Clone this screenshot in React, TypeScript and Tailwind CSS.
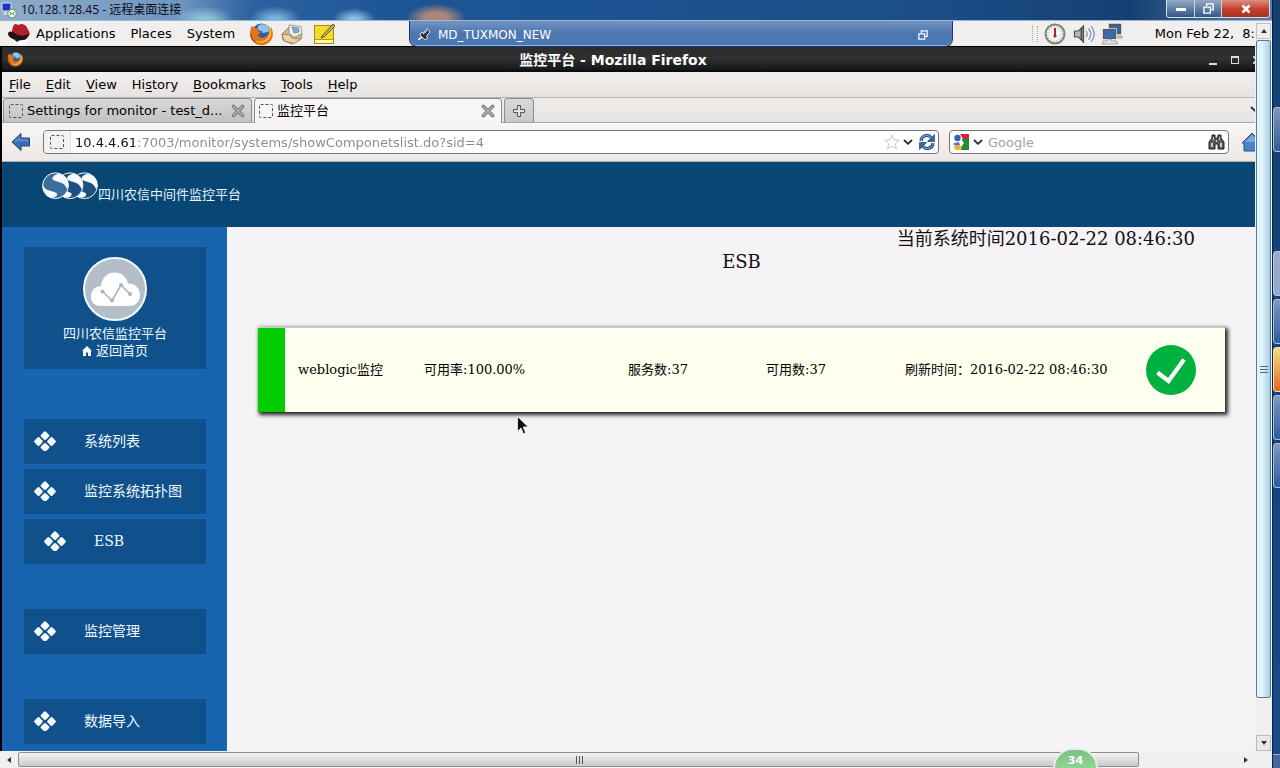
import React from "react";

const uiFont = "font-['DejaVu_Sans','Noto_Sans_CJK_SC',sans-serif]";
const pageFont = "font-['DejaVu_Serif','Noto_Sans_CJK_SC',serif]";

function FirefoxIcon({ className }: { className: string }) {
  return (
    <svg viewBox="0 0 24 24" className={className} aria-hidden="true">
      <circle cx="12.5" cy="11" r="9.5" fill="#2a5fa8" />
      <path d="M9 4c3-3 9-2 11 2 1 3-1 5-3 4-2 2-4 1-4-1-3 0-5-2-4-5z" fill="#8cc4ea" />
      <path d="M3 3.500c.5 1.500 1.500 2 3 2.200C8 5.500 9.500 7 9 9c1 .5 2.500.5 3 1-.5 1.500-2.500 1.500-3 3 1 3 5 3.500 8 1.500 2-1.500 3.500-4 3-7.500 1.500 1 2 1.500 2 1l-.5-4C24.500 9 25 15 21 19.500 17 24 9 24.500 4.500 20 .5 16 0 9 3 3.500z" fill="#e4731b" />
      <path d="M20.500 4c3 5 2 11-1.500 14-3.500 3.500-10 3.500-13 .5 5 2 10 1 12.500-2.500 2.500-3.500 3-7 2-12z" fill="#f8c63c" />
      <path d="M2 10c0 4 2 8.500 6 10.500-5-1-8-6-6-10.500z" fill="#b23a12" />
    </svg>
  );
}

function RedHatIcon() {
  return (
    <svg viewBox="0 0 24 24" className="size-6" aria-hidden="true">
      <path d="M3 13c1 6 6 10 12 10 4 0 6-3 6-7l-8-2z" fill="#fff" />
      <path d="M1 12c0-2 2-3 4-2 4 4 10 6 17 2-1 4-3 6-6 6-6 1-14-1-15-6z" fill="#181414" />
      <path d="M5 10c0-3 1-7 3-8 2 0 3 1 4 1 2-2 5-1 7 1 2 3 3 5 4 8-5 4-14 2-18-2z" fill="#b32027" />
      <path d="M5 9c4 4 10 6 17 3v2C15 16 8 14 5 11z" fill="#3a0c0e" />
      <path d="M4 15c3 2 6 3 9 3l-3 2z" fill="#2b2220" />
    </svg>
  );
}

function MailIcon() {
  return (
    <svg viewBox="0 0 22 22" className="size-[22px]" aria-hidden="true">
      <path d="M1 11 8 4l13 7-1 5-9 5-9-4z" fill="#d9b98a" stroke="#94724a" strokeWidth=".8" />
      <path d="m8 2 12 1.500 1 7-8 4-5-5z" fill="#eef2ee" stroke="#7f8a86" strokeWidth=".8" />
      <path d="m11 4 6.500 1 .5 4-5 1z" fill="#83aac3" stroke="#496d83" strokeWidth=".6" />
      <path d="m1 11 8 1 2 3 9 1-7 4.500L3 18z" fill="#ead2aa" stroke="#94724a" strokeWidth=".8" />
    </svg>
  );
}

function NoteIcon() {
  return (
    <svg viewBox="0 0 22 22" className="size-[22px]" aria-hidden="true">
      <rect x="1.500" y="2.500" width="19" height="18" fill="#f5dc28" stroke="#a58b12" />
      <path d="M2 17h18v3H2z" fill="#fff6a8" />
      <path d="M2 16.500h18" stroke="#b89c18" />
      <path d="M9 13 20 1l2 2L11 14l-3 1z" fill="#d4a95b" stroke="#4a3b1c" strokeWidth=".8" />
    </svg>
  );
}

function PinIcon() {
  return (
    <svg viewBox="0 0 12 12" className="size-3" aria-hidden="true">
      <path d="m0 11 4-3" stroke="#fff" strokeWidth="1.500" />
      <path d="m3 4 3-1 3-3 3 3-3 3 0 4-2 1-5-5z" fill="#2c3137" stroke="#e8f0f8" strokeWidth=".9" />
      <path d="m5 5 4-3" stroke="#fff" />
    </svg>
  );
}

function RestoreIcon({ className }: { className: string }) {
  return (
    <svg viewBox="0 0 12 12" className={className} fill="none" stroke="currentColor" strokeWidth="1.500" aria-hidden="true">
      <path d="M4 3.500V1h7v6.500H8.500" />
      <path d="M1 4.500h7V11H1z" />
    </svg>
  );
}

function GaugeIcon() {
  return (
    <svg viewBox="0 0 22 22" className="size-[22px]" aria-hidden="true">
      <circle cx="11" cy="11" r="9.500" fill="#f4f4f1" stroke="#7c807e" strokeWidth="2" />
      <circle cx="11" cy="11" r="7.300" fill="none" stroke="#a4a7a4" strokeDasharray="1 2" strokeWidth="1.300" />
      <path d="M11 5v8" stroke="#c31e1e" strokeWidth="2" />
      <circle cx="11" cy="13" r="1.600" fill="#b02020" />
    </svg>
  );
}

function SpeakerIcon() {
  return (
    <svg viewBox="0 0 22 22" className="size-[22px]" fill="none" aria-hidden="true">
      <path d="M1.500 8v6h4l5 5V3l-5 5z" fill="#b4b8b4" stroke="#4c504e" strokeWidth="1.200" />
      <path d="M8.500 5v12" stroke="#4c504e" strokeWidth="2" />
      <path d="M13 8c1.500 2 1.500 4 0 6M15.500 5.500c3 3.500 3 7.500 0 11M18 3c4 5 4 11 0 16" stroke="#6d8fb8" strokeWidth="1.200" />
    </svg>
  );
}

function NetworkIcon() {
  return (
    <svg viewBox="0 0 22 22" className="size-[22px]" aria-hidden="true">
      <path d="M8.500 1.500h11v9h-11z" fill="#3465a4" stroke="#555753" strokeWidth="1.400" />
      <path d="M16 13h5v2h-4z" fill="#d3d7cf" stroke="#888a85" strokeWidth=".7" />
      <path d="M2.500 6.500h12v9h-12z" fill="#3465a4" stroke="#e8e8e4" strokeWidth="2.600" />
      <path d="M2.500 6.500h12v9h-12z" fill="#3a6cab" stroke="#555753" strokeWidth="1.200" />
      <path d="M6.500 16h4v2h5l1 3H1l1-3h4.500z" fill="#e3e5e0" stroke="#888a85" strokeWidth=".7" />
    </svg>
  );
}

function PagePlaceholder() {
  return (
    <svg viewBox="0 0 14 14" className="size-3.5 shrink-0" aria-hidden="true">
      <rect x=".5" y=".5" width="13" height="13" rx="1" fill="none" stroke="#555" strokeDasharray="3 2" />
    </svg>
  );
}

function TabClose() {
  return (
    <svg viewBox="0 0 14 14" className="size-3.5" aria-hidden="true">
      <path d="m2.500 2.500 9 9m0-9-9 9" stroke="#777" strokeWidth="3.600" strokeLinecap="round" />
      <path d="m2.500 2.500 9 9m0-9-9 9" stroke="#b5b5b3" strokeWidth="1.600" strokeLinecap="round" />
    </svg>
  );
}

function Chevron() {
  return (
    <svg viewBox="0 0 10 6" className="h-1.5 w-2.5" aria-hidden="true">
      <path d="m1 1 4 3.800L9 1" fill="none" stroke="#2a2a2a" strokeWidth="1.800" />
    </svg>
  );
}

function BackIcon() {
  return (
    <svg viewBox="0 0 20 20" className="size-5" aria-hidden="true">
      <path d="M1 10 10 1.500v4.500h8.500v8H10v4.500z" fill="#3b6fb3" stroke="#1f4378" strokeLinejoin="round" />
      <path d="M2.500 10 9 4v3h8.500v2z" fill="#5a87c4" />
    </svg>
  );
}

function ReloadIcon() {
  return (
    <svg viewBox="0 0 16 16" className="size-4" fill="none" aria-hidden="true">
      <path d="M2 7c.5-6 7-7 10-3.500M14 9c-.5 6-7 7-10 3.500" stroke="#204a87" strokeWidth="3.200" />
      <path d="M2 7c.5-6 7-7 10-3.500M14 9c-.5 6-7 7-10 3.500" stroke="#729fcf" strokeWidth="1.200" />
      <path d="M15.500.5v7H8.500zM.5 15.500v-7h7z" fill="#3465a4" stroke="#204a87" strokeWidth=".7" />
    </svg>
  );
}

function GoogleIcon() {
  return (
    <svg viewBox="0 0 16 16" className="size-4" aria-hidden="true">
      <path d="M0 0h16v16H0z" fill="#fff" />
      <path d="M7 0h9v5h-6z" fill="#d5242c" />
      <path d="M9 5h7v11H8z" fill="#1e8f38" />
      <circle cx="4.500" cy="4" r="3.200" fill="#2d62b8" />
      <path d="M0 10c2-2 5-1.500 7-2l1 3-5 1z" fill="#4a78c4" />
      <path d="m8 5 3 4-3 4-2-4z" fill="#fff" />
      <ellipse cx="5" cy="13.500" rx="3.800" ry="2.500" fill="#e9b42c" />
    </svg>
  );
}

function BinocularsIcon() {
  return (
    <svg viewBox="0 0 17 16" className="h-4 w-[17px]" aria-hidden="true">
      <path d="M4 1h3v3h3V1h3v3l3 4v7h-6v-5H7v5H1V8l3-4z" fill="#595b57" stroke="#20211f" />
      <path d="M3 9h2v4H3zM12 9h2v4h-2zM5 3h1v3H5zM11 3h1v3h-1zM8 6h1v2H8z" fill="#c9cbc6" />
    </svg>
  );
}

function HomeToolbarIcon() {
  return (
    <svg viewBox="0 0 22 20" className="h-5 w-[22px] shrink-0" aria-hidden="true">
      <path d="M1 11 11 1l10 10h-2v8H3v-8z" fill="#4d82c4" stroke="#27508a" strokeLinejoin="round" />
      <path d="M4 10 11 3l7 7z" fill="#7ba6db" />
    </svg>
  );
}

function BrandLogo() {
  return (
    <svg viewBox="0 0 56 28" className="h-7 w-14" aria-hidden="true">
      {[29, 14.5, 0].map((x) => (
        <g key={x} transform={`translate(${x} 0)`}>
          <circle cx="13.500" cy="13.700" r="12.900" fill={x === 0 ? "#3a6f9b" : "#1b5080"} stroke="#f3faff" strokeWidth="1" />
          <path d="M11 5c4-5 10-3 14 2 2 4 2 7 0 10-2-5-5-6-8-7-5-1-8-3-6-5z" fill="#f6fcff" />
          <path d="M1 13c2 5 5 5 8 6 4 1 7 2 6 4-1 3-7 4-10 1-3-3-5-7-4-11z" fill="#f6fcff" />
        </g>
      ))}
    </svg>
  );
}

function CloudAvatar() {
  return (
    <svg viewBox="0 0 64 64" className="size-16" aria-hidden="true">
      <circle cx="32" cy="32" r="31" fill="#b4bec8" stroke="#f2fbff" strokeWidth="2" />
      <path d="M18 49C11 49 8 44.500 8 39.500 8 33 13 29 18 29c1-8 6-13.500 13.500-13.500 7 0 12 4.500 13.500 11C52 26 57 31 57 38c0 6-4 11-10 11z" fill="#fff" />
      <path d="m19.500 34.500 9.500 9 9-15.500 9 9" fill="none" stroke="#a9b4bd" strokeWidth="1.600" />
      <g fill="#a9b4bd">
        <circle cx="19.500" cy="34.500" r="2" />
        <circle cx="29" cy="43.500" r="2" />
        <circle cx="38" cy="28" r="2" />
        <circle cx="47" cy="37" r="2" />
      </g>
    </svg>
  );
}

function DiamondsIcon() {
  return (
    <svg viewBox="0 0 22 20" className="h-5 w-[22px]" fill="#f4fcff" aria-hidden="true">
      <rect x="7.500" y="1.200" width="7" height="7" rx="1.500" transform="rotate(45 11 4.700)" />
      <rect x="7.500" y="12.800" width="7" height="7" rx="1.500" transform="rotate(45 11 16.300)" />
      <rect x="1" y="7" width="7" height="7" rx="1.500" transform="rotate(45 4.500 10.500)" />
      <rect x="14" y="7" width="7" height="7" rx="1.500" transform="rotate(45 17.500 10.500)" />
    </svg>
  );
}

function HomeIcon() {
  return (
    <svg viewBox="0 0 10 10" className="size-2.5" aria-hidden="true">
      <path d="M5 0 0 5h1v5h3V6.500h2V10h3V5h1z" fill="#fff" />
    </svg>
  );
}

function CheckBadge() {
  return (
    <svg viewBox="0 0 50 50" className="size-[50px]" role="img" aria-label="正常">
      <circle cx="25" cy="25" r="25" fill="#00b140" />
      <path d="m11.500 27.500 11 8.500L38 14.500" fill="none" stroke="#fff" strokeWidth="4.200" />
    </svg>
  );
}

function Arrow({ dir }: { dir: "up" | "down" | "left" | "right" }) {
  const paths = { up: "M1 6l3-4 3 4z", down: "M1 2l3 4 3-4z", left: "M6 1L2 4l4 3z", right: "M2 1l4 3-4 3z" };
  return (
    <svg viewBox="0 0 8 8" className="size-2" aria-hidden="true">
      <path d={paths[dir]} fill="#333" />
    </svg>
  );
}

function RemoteTitleBar() {
  return (
    <header className="flex h-[21px] shrink-0 items-start justify-between overflow-hidden border-b border-[#9db8d6] bg-[radial-gradient(ellipse_30px_14px_at_204px_20px,#8cc4d8_20%,transparent),radial-gradient(ellipse_26px_14px_at_275px_20px,#78b6dc_20%,transparent),radial-gradient(ellipse_22px_12px_at_354px_20px,#8fc0e0_20%,transparent),radial-gradient(ellipse_30px_14px_at_436px_18px,#a98479_40%,transparent),linear-gradient(90deg,#8facca_0px,#6f96bf_180px,#2d62a0_250px,#1d5594_400px,#1b4f8a_900px,#164073_1130px,#5d7fa8_1272px)]">
      <div className="flex h-5 items-center gap-1 pl-px font-['Open_Sans','Noto_Sans_CJK_SC',sans-serif] text-xs text-[#0a0a14]">
        <svg viewBox="0 0 16 16" className="size-4" aria-hidden="true">
          <path d="M1 1h9v8H1z" fill="#1c36c4" stroke="#dfe6f0" />
          <path d="M3 10h5v3H2z" fill="#cfd6df" />
          <circle cx="11" cy="11.500" r="4.300" fill="#f2f7ee" stroke="#6b8c62" />
          <path d="m8.500 10 2 1.500-2 1.500m5-3-2 1.500 2 1.500" fill="none" stroke="#2f8a2b" />
        </svg>
        <h1 className="whitespace-nowrap">10.128.128.45 - 远程桌面连接</h1>
      </div>
      <div className="mr-0.5 flex h-[18px] overflow-hidden rounded-b border border-t-0 border-[#d4e0ee] text-white">
        <button type="button" aria-label="最小化" className="flex w-7 items-end justify-center border-r border-[#c4d2e4] bg-linear-to-b from-[#93a9c4] to-[#345884] pb-1.5">
          <span className="h-[3px] w-2.5 bg-white" />
        </button>
        <button type="button" aria-label="还原" className="flex w-[27px] items-center justify-center border-r border-[#c4d2e4] bg-linear-to-b from-[#93a9c4] to-[#345884]">
          <RestoreIcon className="size-[11px]" />
        </button>
        <button type="button" aria-label="关闭" className="flex w-[47px] items-center justify-center bg-linear-to-b from-[#d9907f] via-[#c8402c] to-[#a8301f]">
          <svg viewBox="0 0 10 10" className="size-2.5" aria-hidden="true">
            <path d="m1.500 1.500 7 7m0-7-7 7" stroke="#fff" strokeWidth="2.600" />
          </svg>
        </button>
      </div>
    </header>
  );
}

function DesktopPanel() {
  return (
    <div className={`relative flex h-[26px] shrink-0 items-center justify-between border-b border-black bg-[#f1efee] text-[13px] text-black ${uiFont}`}>
      <nav className="flex items-center pl-[7px]">
        <RedHatIcon />
        <button type="button" className="ml-[5px]">Applications</button>
        <button type="button" className="ml-[15px]">Places</button>
        <button type="button" className="ml-[15px]">System</button>
        <button type="button" aria-label="Firefox" className="ml-3.5"><FirefoxIcon className="size-6" /></button>
        <button type="button" aria-label="Mail" className="ml-2"><MailIcon /></button>
        <button type="button" aria-label="Notes" className="ml-2.5"><NoteIcon /></button>
      </nav>
      <div className="flex items-center">
        <span className="h-4 w-1.5 border-x border-dotted border-[#a9a7a5]" />
        <span className="ml-1.5"><GaugeIcon /></span>
        <span className="ml-[7px]"><SpeakerIcon /></span>
        <span className="ml-1.5"><NetworkIcon /></span>
        <span className="ml-8 whitespace-pre">Mon Feb 22,  8:</span>
      </div>
      <div className="absolute top-0 left-[409px] flex h-[26px] w-[544px] items-center justify-between rounded-b-lg border border-t-0 border-[#17386f] bg-linear-to-b from-[#7394c3] via-[#4c76b0] to-[#4a77b3] pt-0.5 pr-6 pl-2 text-xs text-white shadow-[inset_0_-1px_0_#8fb6dd]">
        <div className="flex items-center gap-2">
          <PinIcon />
          <span>MD_TUXMON_NEW</span>
        </div>
        <button type="button" aria-label="还原"><RestoreIcon className="size-2.5" /></button>
      </div>
    </div>
  );
}

function WindowTitle() {
  return (
    <div className={`flex h-[25px] shrink-0 items-center border-b-2 border-[#0a0c12] bg-linear-to-b from-[#2c2c2c] via-[#303030] to-[#151719] pl-[5px] text-white ${uiFont}`}>
      <FirefoxIcon className="size-4" />
      <h2 className="flex-1 pt-0.5 text-center text-sm font-bold">监控平台 - Mozilla Firefox</h2>
      <div className="flex h-4 w-[52px] items-center overflow-hidden pl-[6px]">
        <button type="button" aria-label="Minimize" className="flex h-3 w-2 shrink-0 items-end"><span className="h-0.5 w-full bg-[#ddd]" /></button>
        <button type="button" aria-label="Maximize" className="mt-0.5 ml-3.5 size-2 shrink-0 border border-t-2 border-[#ddd]" />
        <button type="button" aria-label="Close" className="mt-0.5 ml-3.5 shrink-0">
          <svg viewBox="0 0 8 8" className="size-2" aria-hidden="true"><path d="m0 0 8 8m0-8L0 8" stroke="#ddd" strokeWidth="1.800" /></svg>
        </button>
      </div>
    </div>
  );
}

const menus: [string, string, string][] = [
  ["", "F", "ile"],
  ["", "E", "dit"],
  ["", "V", "iew"],
  ["Hi", "s", "tory"],
  ["", "B", "ookmarks"],
  ["", "T", "ools"],
  ["", "H", "elp"],
];

function BrowserChrome() {
  return (
    <div className={`shrink-0 text-[13px] text-black ${uiFont}`}>
      <nav className="flex h-[26px] items-center gap-[15px] border-b border-[#b5b3b1] bg-linear-to-b from-[#f3eeeb] to-[#e5e3e2] pl-[7px]">
        {menus.map(([before, key, after]) => (
          <button type="button" key={before + key + after}>
            {before}<span className="underline underline-offset-2">{key}</span>{after}
          </button>
        ))}
      </nav>
      <div className="flex h-[25px] items-end justify-between border-b border-[#a9a7a5] bg-linear-to-b from-[#f0ecea] to-[#e6e4e2]">
        <div className="flex h-6 gap-0.5 pl-px" role="tablist">
          <div className="flex w-[249px] items-center rounded-t border border-b-0 border-[#8e8c8a] bg-linear-to-b from-[#dbd9d7] to-[#c4c2c0] pr-1.5 pl-[5px]">
            <PagePlaceholder />
            <button type="button" role="tab" aria-selected="false" className="ml-1 flex-1 text-left whitespace-nowrap">Settings for monitor - test_d...</button>
            <button type="button" aria-label="Close tab"><TabClose /></button>
          </div>
          <div className="-mb-px flex w-[248px] items-center rounded-t border border-b-0 border-[#8e8c8a] bg-[#f8f5f7] pr-1.5 pl-1">
            <PagePlaceholder />
            <button type="button" role="tab" aria-selected="true" className="ml-1 flex-1 text-left">监控平台</button>
            <button type="button" aria-label="Close tab"><TabClose /></button>
          </div>
          <button type="button" aria-label="New tab" className="flex w-[30px] items-center justify-center rounded-t border border-b-0 border-[#8e8c8a] bg-linear-to-b from-[#dbd9d7] to-[#cac8c6]">
            <svg viewBox="0 0 14 14" className="size-3.5" aria-hidden="true">
              <path d="M5.500 1.500h3v4h4v3h-4v4h-3v-4h-4v-3h4z" fill="#e4e4e2" stroke="#555" />
            </svg>
          </button>
        </div>
        <button type="button" aria-label="List all tabs" className="mb-2.5 flex w-[5px] overflow-hidden"><span className="shrink-0"><Chevron /></span></button>
      </div>
      <div className="flex h-[39px] items-center border-b border-[#b3b1af] bg-linear-to-b from-[#f8f5f4] to-[#ebe8e6] pl-[9px]">
        <button type="button" aria-label="Back"><BackIcon /></button>
        <div className="ml-3 flex h-6 flex-1 items-center rounded border border-[#777] bg-white pr-[3px]">
          <span className="flex h-full w-[27px] items-center justify-center rounded-l border-r border-[#ddd] bg-[#f3f2f2]"><PagePlaceholder /></span>
          <input
            aria-label="Location"
            defaultValue="10.4.4.61:7003/monitor/systems/showComponetslist.do?sid=4"
            className="h-5 min-w-0 flex-1 bg-[linear-gradient(90deg,#111_63px,#8a8a8a_63px)] bg-clip-text pl-1 text-[13px] text-transparent outline-none"
          />
          <button type="button" aria-label="Bookmark">
            <svg viewBox="0 0 16 16" className="size-4" aria-hidden="true">
              <path d="m8 1 2.100 4.800 5 .5-3.800 3.400 1.100 5L8 12.200l-4.400 2.500 1.100-5L.9 6.300l5-.5z" fill="#fff" stroke="#c6c6c6" />
            </svg>
          </button>
          <button type="button" aria-label="History" className="ml-[3px]"><Chevron /></button>
          <button type="button" aria-label="Reload" className="ml-1.5"><ReloadIcon /></button>
        </div>
        <div className="ml-2.5 flex h-6 w-[280px] items-center rounded border border-[#777] bg-white px-[3px]">
          <button type="button" aria-label="Search engine" className="flex items-center gap-1"><GoogleIcon /><Chevron /></button>
          <input aria-label="Search" placeholder="Google" className="ml-[5px] h-5 min-w-0 flex-1 text-[13px] outline-none placeholder:text-[#a3a3a3]" />
          <button type="button" aria-label="Find"><BinocularsIcon /></button>
        </div>
        <button type="button" aria-label="Home" className="ml-3 flex w-3.5 overflow-hidden"><HomeToolbarIcon /></button>
      </div>
    </div>
  );
}

function SideItem({ label, nested = false }: { label: string; nested?: boolean }) {
  return (
    <li>
      <a href="#" className={`flex h-[45px] items-center gap-7 bg-[#10518b] pb-0.5 text-sm text-[#eefaff] ${nested ? "pl-5" : "pl-2.5"}`}>
        <DiamondsIcon />
        {label}
      </a>
    </li>
  );
}

function Sidebar() {
  return (
    <aside className="w-[225px] shrink-0 overflow-hidden bg-[#1864ae] pt-5 pr-[21px] pl-[22px]">
      <div className="flex h-[122px] flex-col items-center bg-[#10518b] pt-2.5 text-[13px] leading-[17px] text-[#eefaff]">
        <CloudAvatar />
        <p className="mt-1">四川农信监控平台</p>
        <a href="#" className="flex items-center gap-1"><HomeIcon />返回首页</a>
      </div>
      <ul className="mt-[50px] flex flex-col gap-[5px]">
        <SideItem label="系统列表" />
        <SideItem label="监控系统拓扑图" />
        <SideItem label="ESB" nested />
      </ul>
      <ul className="mt-[45px] flex flex-col gap-[45px]">
        <SideItem label="监控管理" />
        <SideItem label="数据导入" />
      </ul>
    </aside>
  );
}

function MonitorPage() {
  return (
    <div className={`flex min-h-0 flex-1 flex-col ${pageFont}`}>
      <header className="flex h-[65px] shrink-0 items-start bg-[#084673] pt-2.5 pl-10 text-[13px] text-[#e6f5ff]">
        <BrandLogo />
        <h3 className="mt-[13px]">四川农信中间件监控平台</h3>
      </header>
      <div className="flex min-h-0 flex-1">
        <Sidebar />
        <main className="relative flex-1 bg-[#f6f3f7] pr-[30px] pl-[31px] text-black">
          <p className="pr-[30px] text-right text-lg leading-6 text-[#111]">当前系统时间2016-02-22 08:46:30</p>
          <h4 className="text-center text-lg leading-[22px] text-[#111]">ESB</h4>
          <section className="mt-[54px] flex h-[85px] border-t border-[#ccc] bg-[#feffee] text-[13px] shadow-[2px_2px_4px_1px_#222]">
            <div className="w-[27px] bg-[#00cd00]" />
            <div className="grid flex-1 grid-cols-[126fr_204fr_138fr_139fr_241fr_79fr] items-center pl-[13px] whitespace-nowrap">
              <a href="#">weblogic监控</a>
              <span>可用率:100.00%</span>
              <span>服务数:37</span>
              <span>可用数:37</span>
              <span>刷新时间：2016-02-22 08:46:30</span>
              <CheckBadge />
            </div>
          </section>
          <svg viewBox="0 0 12 19" className="absolute top-[189px] left-[290px] h-[19px] w-3" aria-hidden="true">
            <path d="M.5.5v15L4 12l2.500 6 2.300-1L6.300 11h5z" fill="#111" stroke="#fff" strokeWidth=".8" />
          </svg>
        </main>
      </div>
    </div>
  );
}

function VerticalScroll() {
  return (
    <div className="flex w-[17px] shrink-0 flex-col items-center bg-[#f0f0f1] px-px pt-0.5">
      <button type="button" aria-label="Scroll up" className="flex h-4 w-full items-center justify-center border border-[#c2c2c2] bg-[#eee]"><Arrow dir="up" /></button>
      <div className="mt-px flex min-h-0 w-full flex-[657] flex-col items-center justify-center gap-px rounded-xs border border-[#517f9b] bg-linear-to-r from-[#dff3fc] from-40% to-[#a9cfe2]">
        <span className="h-0.5 w-2 border-b border-[#466a80]" />
        <span className="h-0.5 w-2 border-b border-[#466a80]" />
        <span className="h-0.5 w-2 border-b border-[#466a80]" />
      </div>
      <div className="flex-[37]" />
      <button type="button" aria-label="Scroll down" className="flex h-4 w-full items-center justify-center border border-[#bbb] bg-[#e9e9e9]"><Arrow dir="down" /></button>
    </div>
  );
}

function HorizontalScroll() {
  return (
    <div className="relative flex h-[17px] shrink-0 items-center bg-[#f0f0f1] pr-[17px]">
      <button type="button" aria-label="Scroll left" className="flex w-[18px] justify-center"><Arrow dir="left" /></button>
      <div className="flex h-[15px] flex-[1121] items-center justify-center gap-px rounded-xs border border-[#8f8f8f] bg-linear-to-b from-[#f3f3f3] to-[#cacaca]">
        <span className="h-2 w-0.5 border-r border-[#555]" />
        <span className="h-2 w-0.5 border-r border-[#555]" />
        <span className="h-2 w-0.5 border-r border-[#555]" />
      </div>
      <div className="flex-[98]" />
      <button type="button" aria-label="Scroll right" className="flex w-[18px] justify-center"><Arrow dir="right" /></button>
      <div className="absolute bottom-0 left-[1053px] flex h-5 w-[45px] items-center justify-center overflow-hidden rounded-t-full border-2 border-b-0 border-[#e3eee4] bg-linear-to-b from-[#7dbd83] to-[#8ed692] pt-1 font-['DejaVu_Sans',sans-serif] text-[11px] font-bold text-white">34</div>
    </div>
  );
}

function Taskbar() {
  return (
    <div className="flex w-2 shrink-0 flex-col gap-[3px] border-l border-[#0c2344] bg-linear-to-b from-[#153f70] to-[#174a85] pt-[107px]">
      <span className="mb-24 h-[45px] shrink-0 rounded-l-sm border border-r-0 border-[#a9c2de] bg-linear-to-b from-[#8099bb] to-[#305c94]" />
      <span className="h-[45px] shrink-0 rounded-l-sm border border-r-0 border-[#b9cbe0] bg-linear-to-b from-[#9aacc9] to-[#8fa9cb]" />
      <span className="h-[45px] shrink-0 rounded-l-sm border border-r-0 border-[#a9c2de] bg-linear-to-b from-[#7f9abf] to-[#2a5c9b]" />
      <span className="h-[45px] shrink-0 rounded-l-sm border border-r-0 border-[#f2e2b0] bg-linear-to-b from-[#f2dd7e] to-[#db6a22]" />
      <span className="h-[45px] shrink-0 rounded-l-sm border border-r-0 border-[#a9c2de] bg-linear-to-b from-[#7f9abf] to-[#2a5c9b]" />
      <span className="h-[45px] shrink-0 rounded-l-sm border border-r-0 border-[#a9c2de] bg-linear-to-b from-[#7f9abf] to-[#2a5c9b]" />
      <span className="mt-auto h-3.5 border-t border-[#9db8d6] bg-[#46699a]" />
    </div>
  );
}

export default function App() {
  return (
    <div className="flex h-screen overflow-hidden bg-[#153f70]">
      <div className="flex min-w-0 flex-1 flex-col">
        <RemoteTitleBar />
        <div className="flex min-h-0 flex-1">
          <div className="flex min-w-0 flex-1 flex-col">
            <DesktopPanel />
            <div className="flex min-h-0 flex-1 flex-col border-l-2 border-black">
              <WindowTitle />
              <BrowserChrome />
              <MonitorPage />
            </div>
          </div>
          <VerticalScroll />
        </div>
        <HorizontalScroll />
      </div>
      <Taskbar />
    </div>
  );
}
